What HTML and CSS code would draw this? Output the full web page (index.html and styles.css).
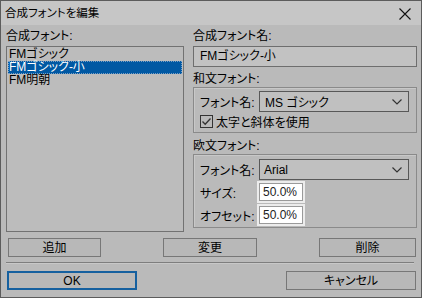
FILE: index.html
```html
<!doctype html>
<html lang="ja">
  <head>
    <meta charset="UTF-8">
    <title>合成フォントを編集</title>
    <link rel="stylesheet" href="styles.css">
  </head>
  <body>
    <div class="window">
      <div class="titlebar">
        <span class="title">合成フォントを編集</span>
        <svg class="close" width="12" height="12" viewBox="0 0 12 12">
          <path d="M0.5 0.5 L11.5 11.5 M11.5 0.5 L0.5 11.5" stroke="#111" stroke-width="1.1" fill="none"/>
        </svg>
      </div>
      <div class="content">
        <div class="main">
          <div class="col-left">
            <div class="label first">合成フォント:</div>
            <ul class="list">
              <li>FMゴシック</li>
              <li class="selected">FMゴシック-小</li>
              <li>FM明朝</li>
            </ul>
          </div>
          <div class="col-right">
            <div class="label first">合成フォント名:</div>
            <div class="field">FMゴシック-小</div>
            <div class="label second">和文フォント:</div>
            <div class="group group-jp">
              <div class="row">
                <span class="row-label wide">フォント名:</span>
                <div class="combo">MS ゴシック<svg class="chevron" width="10" height="6" viewBox="0 0 10 6"><path d="M0.5 0.5 L5 5 L9.5 0.5" stroke="#333" stroke-width="1.2" fill="none"/></svg></div>
              </div>
              <label class="check-row">
                <span class="checkbox">
                  <svg width="11" height="11" viewBox="0 0 11 11"><path d="M1.5 5.5 L4.2 8.3 L9.5 2.5" stroke="#333" stroke-width="1.3" fill="none"/></svg>
                </span>
                太字と斜体を使用
              </label>
            </div>
            <div class="label third">欧文フォント:</div>
            <div class="group group-en">
              <div class="row">
                <span class="row-label wide">フォント名:</span>
                <div class="combo latin">Arial<svg class="chevron" width="10" height="6" viewBox="0 0 10 6"><path d="M0.5 0.5 L5 5 L9.5 0.5" stroke="#333" stroke-width="1.2" fill="none"/></svg></div>
              </div>
              <div class="row input-row">
                <span class="row-label">サイズ:</span>
                <div class="num">50.0%</div>
              </div>
              <div class="row input-row">
                <span class="row-label">オフセット:</span>
                <div class="num">50.0%</div>
              </div>
            </div>
          </div>
        </div>
        <div class="actions">
          <button class="btn add">追加</button>
          <button class="btn change">変更</button>
          <button class="btn remove">削除</button>
        </div>
        <div class="sep"></div>
        <div class="footer">
          <button class="btn ok">OK</button>
          <button class="btn cancel">キャンセル</button>
        </div>
      </div>
    </div>
  </body>
</html>
```

FILE: styles.css
```css
html, body {
  margin: 0;
  padding: 0
}
body {
  background-color: #bababa;
  color: #000;
  font-family: "Liberation Sans", "Noto Sans CJK JP", sans-serif;
  font-feature-settings: "palt";
  font-size: 12px
}
.window {
  background-color: #bababa;
  border: 1px solid #5c5c5c;
  box-sizing: border-box;
  height: 298px;
  overflow: hidden;
  width: 422px
}
.titlebar {
  align-items: center;
  background-color: #c6c6c6;
  display: flex;
  height: 24px;
  justify-content: space-between;
  padding: 0 10px 0 4px
}
.title {
  font-size: 11.5px;
  line-height: 16px
}
.close {
  display: block;
  margin-top: 1px
}
.content {
  padding: 0 4px 0 5px
}
.main {
  display: flex;
  gap: 9px
}
.col-left {
  width: 178px
}
.col-right {
  width: 224px
}
.label {
  line-height: 16px;
  box-sizing: border-box
}
.label.first {
  height: 21px;
  padding-top: 3px
}
.label.second {
  height: 20px;
  padding-top: 4px
}
.label.third {
  height: 21px;
  padding-top: 5px
}
.list {
  background-color: #bcbcbc;
  border: 1px solid #727272;
  box-sizing: border-box;
  height: 186px;
  list-style: none;
  margin: 0;
  padding: 1px
}
.list li {
  height: 13px;
  line-height: 13px;
  padding-left: 1px
}
.list .selected {
  background-color: #0058a3;
  color: #fff;
  outline: 1px dotted #7a9fc4;
  outline-offset: -1px
}
.field {
  background-color: #c2c2c2;
  border: 1px solid #6e6e6e;
  box-sizing: border-box;
  height: 21px;
  line-height: 19px;
  padding-left: 6px
}
.group {
  border: 1px solid #8a8a8a;
  box-shadow: inset 1px 1px 0 #c8c8c8;
  box-sizing: border-box
}
.group-jp {
  height: 46px;
  padding: 3px 7px 0 6px
}
.group-en {
  height: 74px;
  padding: 4px 7px 0 6px
}
.row {
  align-items: center;
  display: flex
}
.row-label {
  flex: none;
  width: 57px
}
.row-label.wide {
  width: 59px
}
.combo {
  align-items: center;
  background-color: #c0c0c0;
  border: 1px solid #585858;
  box-sizing: border-box;
  display: flex;
  flex: 1;
  height: 21px;
  justify-content: space-between;
  padding: 0 6px 0 5px
}
.combo.latin {
  padding-left: 4px
}
.chevron {
  display: block
}
.check-row {
  align-items: center;
  display: flex;
  gap: 3px;
  height: 13px;
  margin-top: 3px
}
.checkbox {
  align-items: center;
  border: 1px solid #333;
  box-sizing: border-box;
  display: flex;
  height: 13px;
  justify-content: center;
  width: 13px
}
.checkbox svg {
  display: block
}
.input-row {
  margin-top: 1px
}
.num {
  background-color: #fff;
  border: 2px solid #ececec;
  box-shadow: inset 0 0 0 1px #9a9a9a;
  box-sizing: border-box;
  color: #222;
  height: 22px;
  line-height: 18px;
  padding-left: 4px;
  width: 48px
}
.actions {
  display: flex;
  height: 19px;
  justify-content: space-between;
  margin-top: 6px;
  padding: 0 1px 0 2px
}
.btn {
  background-color: #b8b8b8;
  border: 1px solid #777;
  box-sizing: border-box;
  color: #000;
  font: inherit;
  font-feature-settings: "palt";
  height: 19px;
  line-height: 16px;
  padding: 0
}
.add {
  width: 93px
}
.change {
  width: 94px
}
.remove {
  width: 97px
}
.sep {
  border-bottom: 1px solid #c8c8c8;
  border-top: 1px solid #7e7e7e;
  margin: 5px 3px 0 0
}
.footer {
  display: flex;
  justify-content: space-between;
  margin-top: 7px;
  padding: 0 1px 0 1px
}
.ok {
  border: 2px solid #15609f;
  width: 130px
}
.cancel {
  width: 130px
}
```
